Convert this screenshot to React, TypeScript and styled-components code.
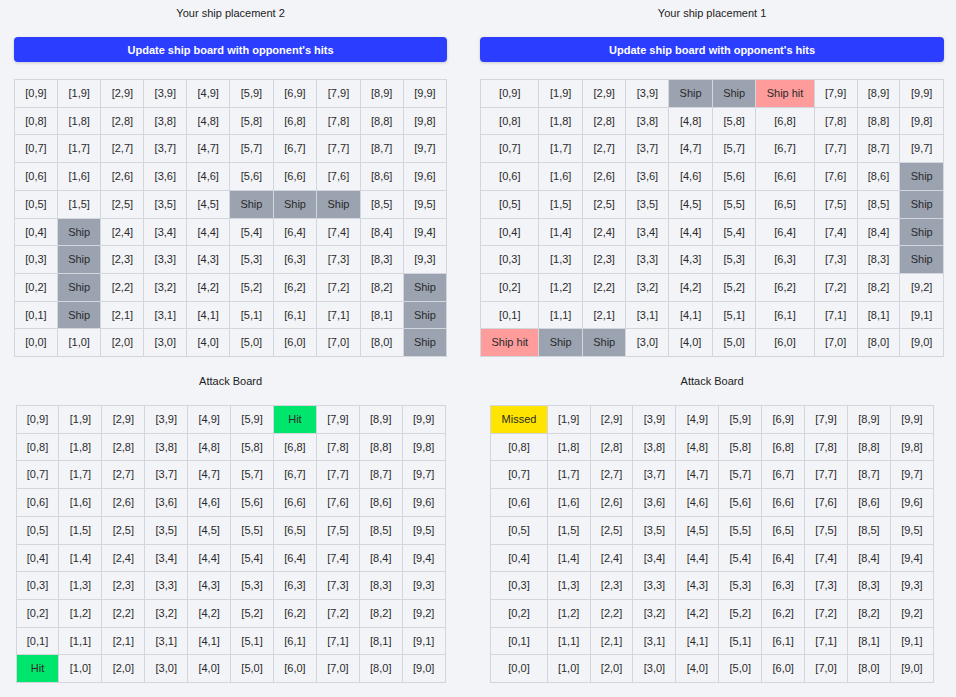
import React from "react";
import styled, { createGlobalStyle } from "styled-components";

const GlobalStyle = createGlobalStyle`
  html, body {
    margin: 0;
    padding: 0;
    background: #f3f4f8;
    font-family: "Liberation Sans", Arial, sans-serif;
  }
`;

const Page = styled.div`
  display: flex;
  align-items: flex-start;
  gap: 33px;
  padding: 7px 13px 0 14px;
  min-height: 690px;
  box-sizing: border-box;
`;

const Column = styled.section`
  display: flex;
  flex-direction: column;
  align-items: center;
  gap: 17px;
`;

const Title = styled.div`
  font-size: 11px;
  color: #222;
  text-align: center;
  line-height: 13px;
`;

const AttackTitle = styled(Title)`
  margin-top: 1px;
`;

const UpdateButton = styled.button`
  align-self: stretch;
  height: 25px;
  border: none;
  border-radius: 4px;
  background: #2b3dff;
  color: #fff;
  font-family: "Liberation Sans", Arial, sans-serif;
  font-weight: 700;
  font-size: 11px;
  box-shadow: 0 1px 3px rgba(0, 0, 0, 0.18);
  cursor: pointer;
`;

const Board = styled.table`
  border-collapse: collapse;
  font-size: 11px;
  color: #2a2a2a;
`;

type Kind = "empty" | "ship" | "shiphit" | "hit" | "missed";

const bg: Record<Kind, string> = {
  empty: "transparent",
  ship: "#9ba3b0",
  shiphit: "#fe9c9c",
  hit: "#00e66c",
  missed: "#ffe400",
};

const Cell = styled.td<{ $kind: Kind }>`
  border: 1px solid #d3d6dd;
  padding: 7px 10.25px;
  height: 12.7px;
  text-align: center;
  white-space: nowrap;
  line-height: 12.7px;
  background: ${(p) => bg[p.$kind]};
`;

type Marks = Record<string, Kind>;

const labelFor = (k: Kind, x: number, y: number) => {
  switch (k) {
    case "ship":
      return "Ship";
    case "shiphit":
      return "Ship hit";
    case "hit":
      return "Hit";
    case "missed":
      return "Missed";
    default:
      return `[${x},${y}]`;
  }
};

const Grid: React.FC<{ marks: Marks }> = ({ marks }) => {
  const rows = [9, 8, 7, 6, 5, 4, 3, 2, 1, 0];
  const cols = [0, 1, 2, 3, 4, 5, 6, 7, 8, 9];
  return (
    <Board>
      <tbody>
        {rows.map((y) => (
          <tr key={y}>
            {cols.map((x) => {
              const k = marks[`${x},${y}`] ?? "empty";
              return (
                <Cell key={x} $kind={k}>
                  {labelFor(k, x, y)}
                </Cell>
              );
            })}
          </tr>
        ))}
      </tbody>
    </Board>
  );
};

const ships2: Marks = {
  "5,5": "ship",
  "6,5": "ship",
  "7,5": "ship",
  "1,4": "ship",
  "1,3": "ship",
  "1,2": "ship",
  "1,1": "ship",
  "9,2": "ship",
  "9,1": "ship",
  "9,0": "ship",
};

const ships1: Marks = {
  "4,9": "ship",
  "5,9": "ship",
  "6,9": "shiphit",
  "9,6": "ship",
  "9,5": "ship",
  "9,4": "ship",
  "9,3": "ship",
  "0,0": "shiphit",
  "1,0": "ship",
  "2,0": "ship",
};

const attack2: Marks = { "6,9": "hit", "0,0": "hit" };
const attack1: Marks = { "0,9": "missed" };

const PlayerPanel: React.FC<{ title: string; ships: Marks; attacks: Marks }> = ({
  title,
  ships,
  attacks,
}) => (
  <Column>
    <Title>{title}</Title>
    <UpdateButton>Update ship board with opponent's hits</UpdateButton>
    <Grid marks={ships} />
    <AttackTitle>Attack Board</AttackTitle>
    <Grid marks={attacks} />
  </Column>
);

export default function App() {
  return (
    <>
      <GlobalStyle />
      <Page>
        <PlayerPanel title="Your ship placement 2" ships={ships2} attacks={attack2} />
        <PlayerPanel title="Your ship placement 1" ships={ships1} attacks={attack1} />
      </Page>
    </>
  );
}
